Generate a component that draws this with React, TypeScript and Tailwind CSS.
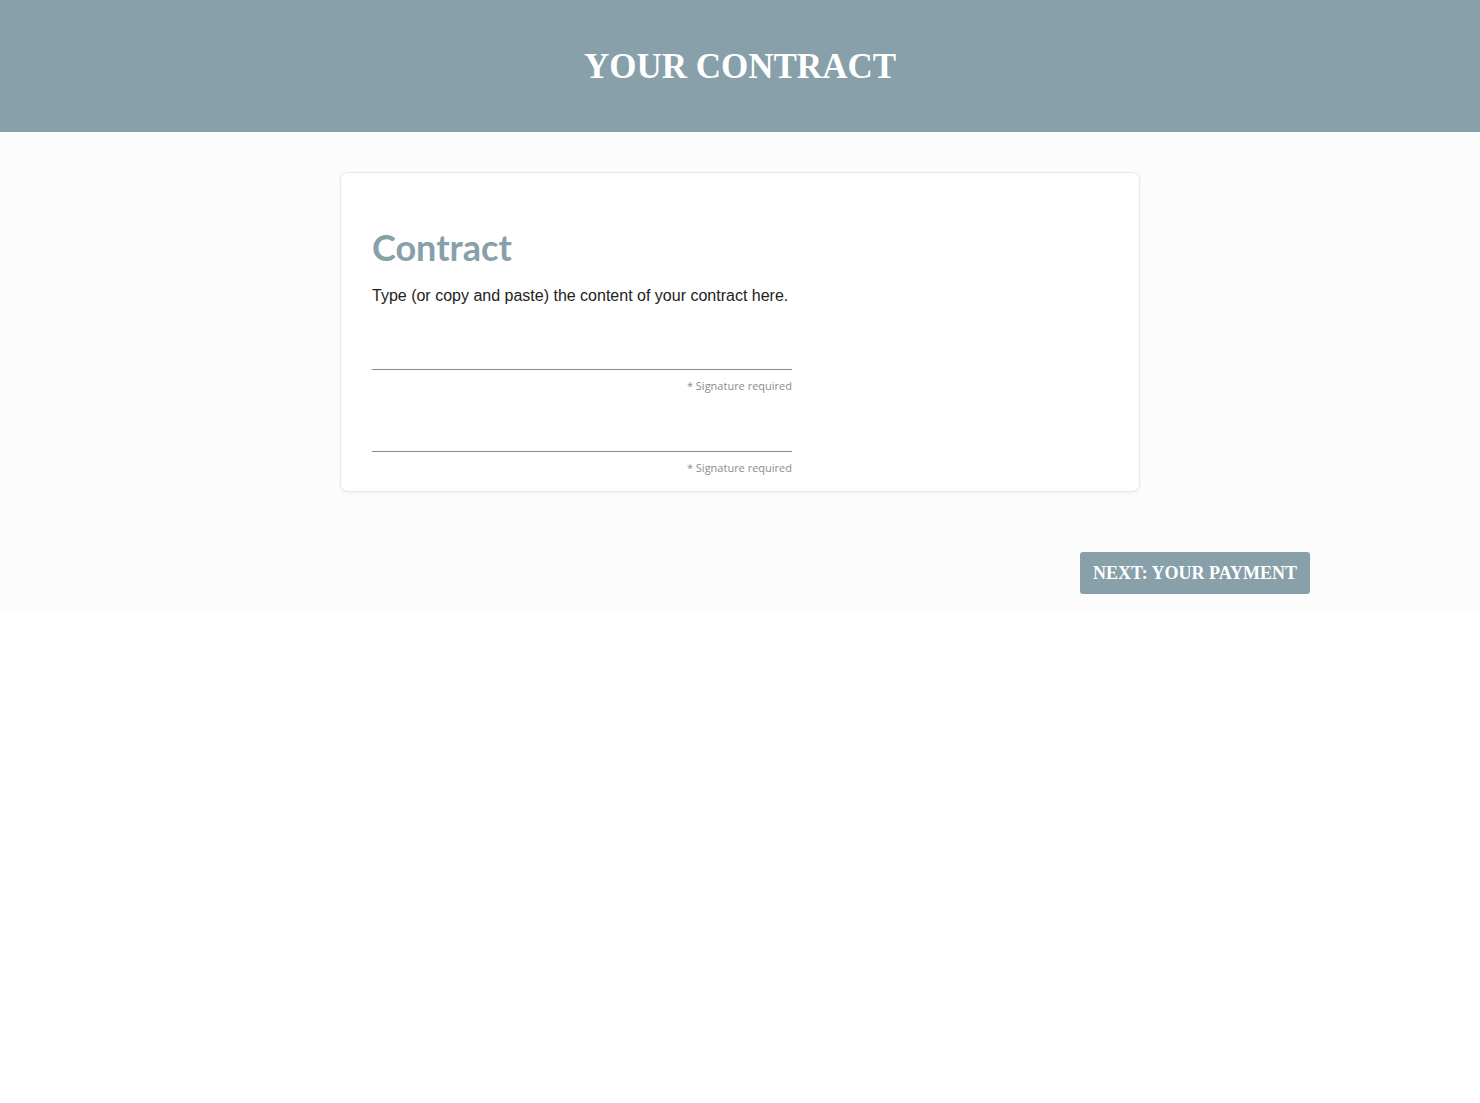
import React from "react";

function SignatureField() {
  return (
    <div className="w-[420px]">
      <div className="h-[48px] border-b border-[#8a8a8a]"></div>
      <p className="mt-[8px] text-right text-[11px] leading-[15px] text-[#8c8c8c] font-['Open_Sans',sans-serif]">
        * Signature required
      </p>
    </div>
  );
}

export default function App() {
  return (
    <div className="min-h-screen bg-white">
      <header className="flex h-[132px] items-center justify-center bg-[#87a0a9]">
        <h1 className="font-['Liberation_Serif',serif] text-[35px] font-bold leading-none text-white">
          YOUR CONTRACT
        </h1>
      </header>

      <main className="bg-[#fcfcfc] pt-[40px] pb-[19px]">
        <div className="mx-auto w-[800px] rounded-[8px] border border-[#e8e8e8] bg-white px-[31px] pt-[52px] pb-[16px] shadow-[0_1px_3px_rgba(0,0,0,0.06)]">
          <h2 className="font-['Lato',sans-serif] text-[36px] font-bold leading-[44px] text-[#87a0a9]">
            Contract
          </h2>
          <p className="mt-[16px] font-['Liberation_Sans',sans-serif] text-[16px] leading-[22px] text-[#222]">
            Type (or copy and paste) the content of your contract here.
          </p>
          <div className="mt-[15px] flex flex-col gap-[11px]">
            <SignatureField />
            <SignatureField />
          </div>
        </div>

        <div className="mx-auto mt-[60px] flex w-[1140px] justify-end">
          <button className="h-[42px] rounded-[3px] bg-[#87a0a9] px-[13px] font-['Liberation_Serif',serif] text-[18px] font-bold text-white">
            NEXT: YOUR PAYMENT
          </button>
        </div>
      </main>
    </div>
  );
}
